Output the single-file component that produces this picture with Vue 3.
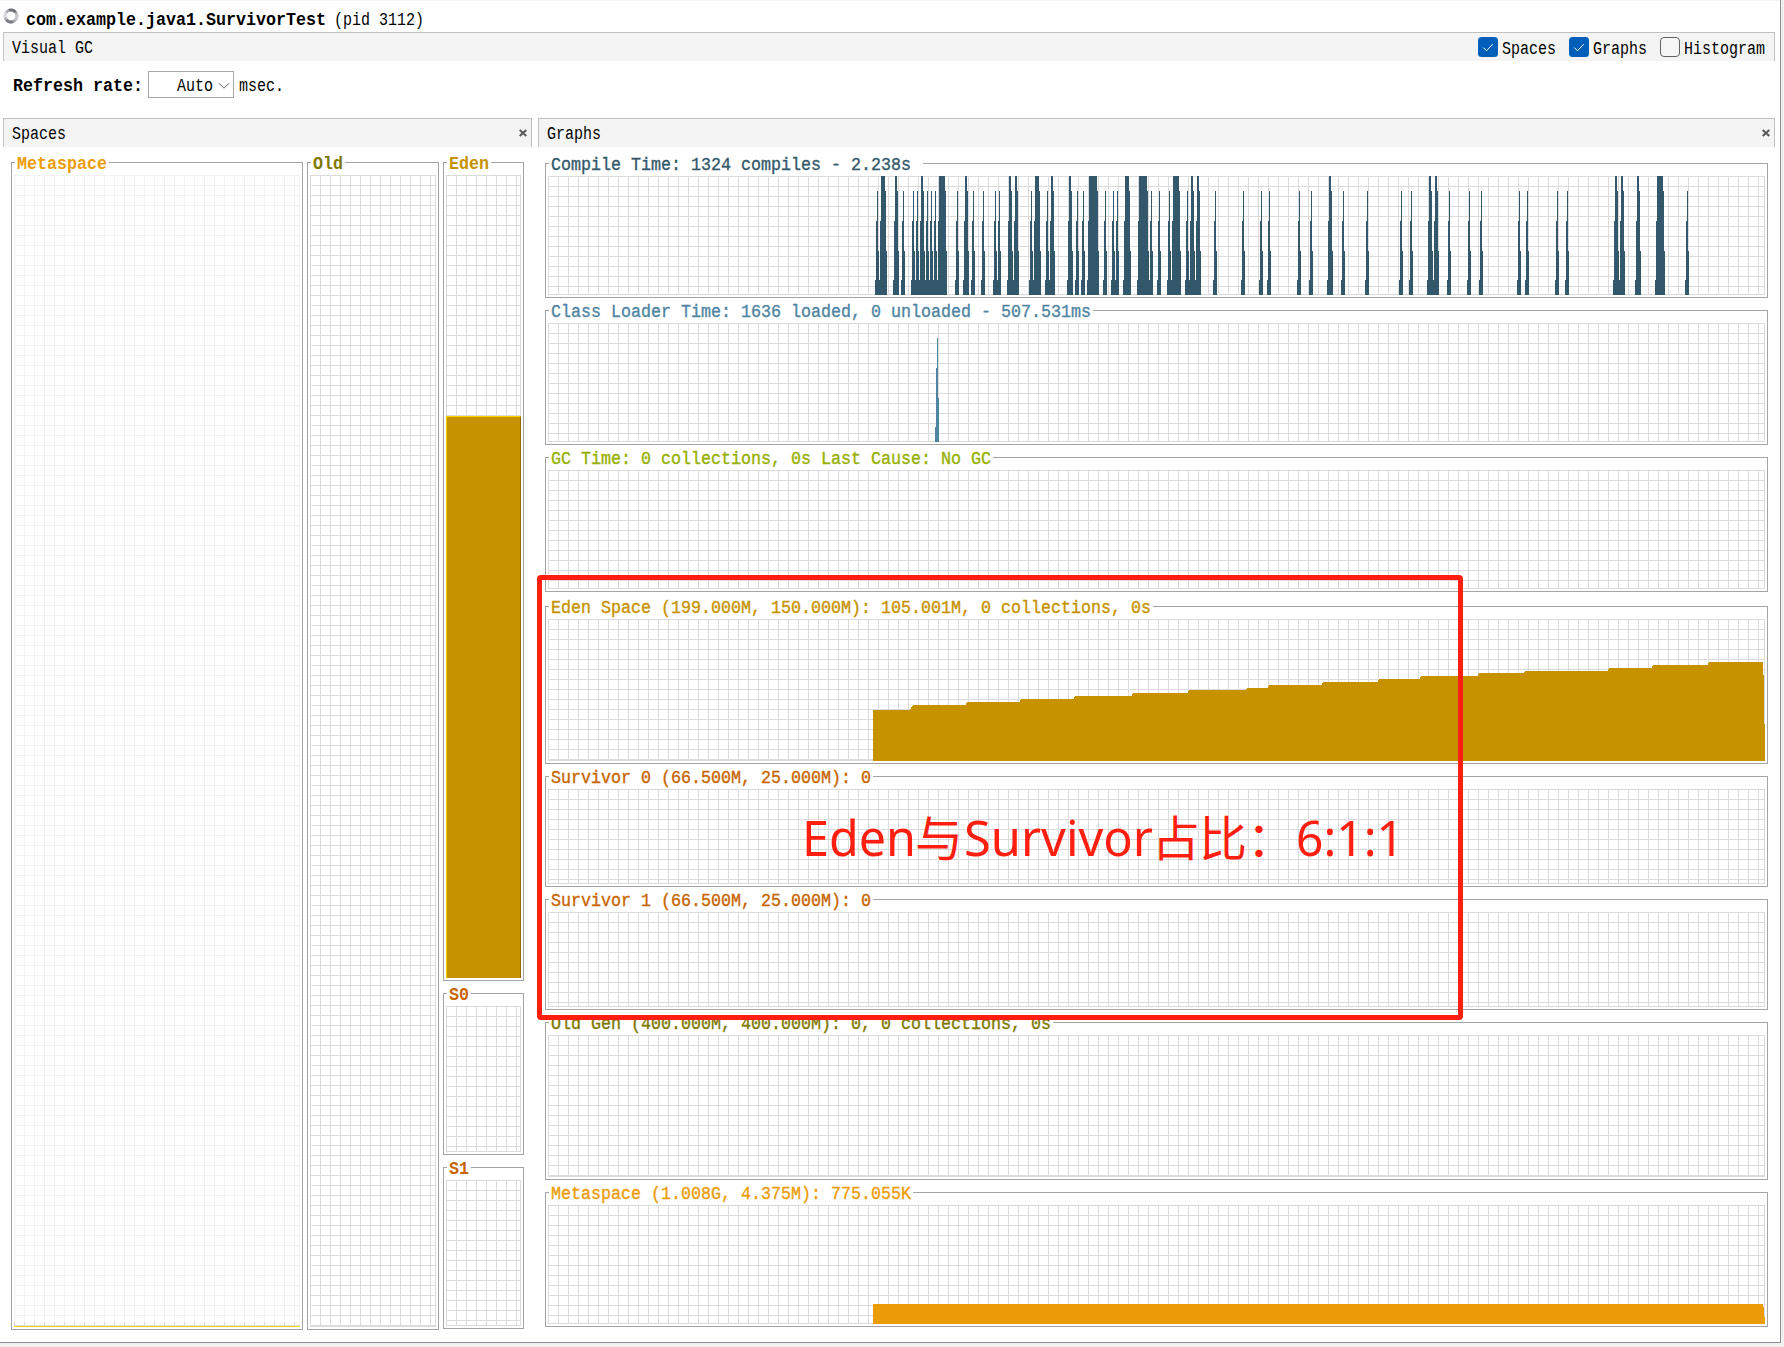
<script setup>
import { h } from 'vue'

// Fixed-pitch label: 9px per character, 10px when bold.
const Mono = (props) => {
  const pitch = props.bold ? 10 : 9
  return h(
    'span',
    { class: ['mono', { 'mono-bold': props.bold }], style: { width: props.text.length * pitch + 'px' } },
    [h('span', { class: 'mono-text' }, props.text)]
  )
}
Mono.props = { text: String, bold: Boolean }

const toggles = [
  { label: 'Spaces', on: true },
  { label: 'Graphs', on: true },
  { label: 'Histogram', on: false }
]

// Compile events: [column, columns at full height]
const compiles = [
  [877, 0], [881, 4], [895, 2], [903, 0], [913, 0], [917, 0], [921, 2], [927, 0], [931, 0], [935, 0],
  [939, 6], [957, 0], [965, 2], [973, 0], [983, 0], [995, 0], [999, 0], [1009, 2], [1015, 2], [1031, 0],
  [1035, 4], [1047, 0], [1051, 2], [1069, 2], [1077, 0], [1083, 0], [1089, 8], [1105, 0], [1113, 0],
  [1117, 0], [1125, 4], [1139, 8], [1151, 0], [1159, 0], [1169, 0], [1173, 6], [1187, 0], [1191, 2],
  [1197, 2], [1215, 0], [1243, 0], [1261, 0], [1269, 0], [1299, 0], [1311, 0], [1329, 2], [1343, 0],
  [1367, 0], [1401, 0], [1411, 0], [1429, 2], [1435, 2], [1449, 0], [1469, 0], [1481, 0], [1519, 0],
  [1527, 0], [1557, 0], [1567, 0], [1615, 2], [1621, 2], [1637, 2], [1657, 6], [1687, 0]
]

const LEFT = 548
const spikes = (list) =>
  list
    .map(([x, full]) => {
      const cols = [[x - 2, 1, 15], [x - 1, 1, 74]]
      if (full) cols.push([x, full, 119])
      cols.push([x + full, 1, 104], [x + full + 1, 1, 44])
      return cols.map(([cx, w, ht]) => `M${cx - LEFT} ${119 - ht}h${w}v${ht}h${-w}z`).join('')
    })
    .join('')

const edenSteps = [
  [966, 702], [1020, 699], [1074, 696], [1132, 693], [1188, 690], [1246, 688], [1268, 685], [1322, 682],
  [1378, 679], [1420, 676], [1478, 673], [1524, 671], [1608, 668], [1652, 665], [1708, 662]
]
const edenPath = (() => {
  const ox = LEFT
  const oy = 619
  let d = `M${873 - ox} ${761 - oy}V${710 - oy}H${910 - ox}V${709 - oy}h1v-2h1v-1h1V${705 - oy}`
  for (const [x, y] of edenSteps) d += `H${x - ox}V${y + 1 - oy}h1V${y - oy}`
  return d + `H${1763 - ox}V${675 - oy}h1V${724 - oy}h1V${761 - oy}z`
})()

const graphs = [
  { id: 'compile', title: 'Compile Time: 1324 compiles - 2.238s ', color: '#33586b', path: spikes(compiles) },
  { id: 'loader', title: 'Class Loader Time: 1636 loaded, 0 unloaded - 507.531ms', color: '#4f85a3', path: spikes([[937, 0]]) },
  { id: 'gc', title: 'GC Time: 0 collections, 0s Last Cause: No GC', color: '#96b000', path: '' },
  { id: 'eden', title: 'Eden Space (199.000M, 150.000M): 105.001M, 0 collections, 0s', color: '#c69200', path: edenPath },
  { id: 's0', title: 'Survivor 0 (66.500M, 25.000M): 0', color: '#c86400', path: '' },
  { id: 's1', title: 'Survivor 1 (66.500M, 25.000M): 0', color: '#c86400', path: '' },
  { id: 'old', title: 'Old Gen (400.000M, 400.000M): 0, 0 collections, 0s', color: '#807800', path: '' },
  { id: 'meta', title: 'Metaspace (1.008G, 4.375M): 775.055K', color: '#ec9c09', path: 'M325 119V99h890v3h1v10h1v7z' }
]
</script>

<template>
  <div class="app">
    <div class="window">
      <header class="title">
        <svg class="spinner" width="16" height="16" viewBox="0 0 16 16" fill="none" stroke-width="2.8">
          <circle cx="8" cy="8" r="6" stroke="#a9aab0" />
          <path d="M3.2 4.4A6 6 0 0 0 2.2 9.6" stroke="#dcdde2" />
          <path d="M6 2.3A6 6 0 0 1 12.6 4.2" stroke="#6d6f78" />
          <path d="M13.6 6A6 6 0 0 1 12.4 12" stroke="#c9cad0" />
          <path d="M10 13.7A6 6 0 0 1 3.6 12" stroke="#777983" />
        </svg>
        <Mono text="com.example.java1.SurvivorTest" bold />
        <Mono class="pid" text="(pid 3112)" />
      </header>

      <div class="bar main-bar">
        <Mono text="Visual GC" />
        <div class="toggles">
          <label v-for="t in toggles" :key="t.label" class="toggle">
            <svg width="20" height="20" viewBox="0 0 20 20" fill="none">
              <rect v-if="t.on" width="20" height="20" rx="3.5" fill="#005fb8" />
              <rect v-else x=".5" y=".5" width="19" height="19" rx="3.5" fill="#f6f6f6" stroke="#626262" />
              <path v-if="t.on" d="M5.3 10.6l3.2 3.2 6.2-6.6" stroke="#fff" stroke-width="1" />
            </svg>
            <Mono :text="t.label" />
          </label>
        </div>
      </div>

      <div class="toolbar">
        <Mono text="Refresh rate:" bold />
        <div class="combo">
          <Mono text="Auto" />
          <svg width="12" height="8" viewBox="0 0 12 8" fill="none" stroke="#5c5c5c"><path d="M1 1.2l5 5 5-5" /></svg>
        </div>
        <Mono text="msec." />
      </div>

      <main class="columns">
        <section class="spaces">
          <div class="bar">
            <Mono text="Spaces" />
            <svg class="close" width="8" height="8" viewBox="0 0 8 8" stroke="#5a5a5a" stroke-width="2"><path d="M.7.9l6.6 6.2M7.3.9L.7 7.1" /></svg>
          </div>
          <div class="spaces-body">
            <div class="panel metaspace">
              <div class="legend"><Mono text="Metaspace" bold /></div>
              <div class="grid faint"><div class="committed"></div></div>
            </div>
            <div class="panel old">
              <div class="legend"><Mono text="Old" bold /></div>
              <div class="grid"></div>
            </div>
            <div class="young">
              <div class="panel eden">
                <div class="legend"><Mono text="Eden" bold /></div>
                <div class="grid"><div class="fill"></div></div>
              </div>
              <div v-for="s in ['S0', 'S1']" :key="s" class="panel survivor">
                <div class="legend"><Mono :text="s" bold /></div>
                <div class="grid"></div>
              </div>
            </div>
          </div>
        </section>

        <section class="graphs">
          <div class="bar">
            <Mono text="Graphs" />
            <svg class="close" width="8" height="8" viewBox="0 0 8 8" stroke="#5a5a5a" stroke-width="2"><path d="M.7.9l6.6 6.2M7.3.9L.7 7.1" /></svg>
          </div>
          <div class="graphs-body">
            <div v-for="g in graphs" :key="g.id" class="panel graph" :class="'graph-' + g.id" :style="{ color: g.color }">
              <div class="legend"><Mono class="light" :text="g.title" bold /></div>
              <div class="grid">
                <svg v-if="g.path" class="plot" shape-rendering="crispEdges"><path :d="g.path" fill="currentColor" /></svg>
              </div>
            </div>
          </div>
        </section>
      </main>
    </div>

    <div class="highlight"></div>
    <svg class="note" width="620" height="80" fill="#ff1e10">
      <text y="61">
        <tspan x="1" textLength="114" lengthAdjust="spacingAndGlyphs">Eden</tspan>
        <tspan x="114" class="cjk">与</tspan>
        <tspan x="163" textLength="189" lengthAdjust="spacingAndGlyphs">Survivor</tspan>
        <tspan x="351" class="cjk">占</tspan>
        <tspan x="398" class="cjk">比</tspan>
        <tspan x="446" class="cjk">：</tspan>
        <tspan x="495" textLength="108" lengthAdjust="spacingAndGlyphs">6:1:1</tspan>
      </text>
    </svg>
  </div>
</template>

<style>
body {
  margin: 0;
}
.mono {
  display: inline-block;
  flex: none;
  height: 20px;
  line-height: 20px;
  font-family: 'Liberation Mono', monospace;
  font-size: 18px;
  white-space: pre;
}
.mono-text {
  display: inline-block;
  transform: scaleX(0.8332);
  transform-origin: 0 0;
}
.mono-bold {
  font-weight: 700;
}
.mono-bold .mono-text {
  transform: scaleX(0.9258);
}
.mono.light {
  font-weight: 400;
  -webkit-text-stroke: 0.35px currentColor;
}
</style>

<style scoped>
.app {
  position: relative;
  width: 1784px;
  height: 1347px;
  overflow: hidden;
  background: #f0f0f0;
  color: #000;
}
.window {
  box-sizing: border-box;
  width: 1781px;
  height: 1343px;
  border: solid #8d8d95;
  border-width: 0 1px 1px 0;
  background: #fff;
}
.title {
  box-sizing: border-box;
  display: flex;
  height: 32px;
  padding: 9px 0 0 3px;
  border-top: 1px solid #f6f6f6;
}
.spinner {
  margin: -2px 7px 0 0;
}
.pid {
  margin-left: 8px;
}
.bar {
  box-sizing: border-box;
  display: flex;
  justify-content: space-between;
  height: 29px;
  padding: 5px 4px 0 8px;
  border: solid #c0c0c0;
  border-width: 1px 1px 0;
  background: #f4f4f4;
}
.main-bar {
  width: 1772px;
  margin-left: 3px;
  padding: 5px 9px 0 8px;
}
.toggles {
  display: flex;
  gap: 13px;
}
.toggle {
  display: flex;
  gap: 4px;
}
.toggle svg {
  margin-top: -1px;
}
.toggle .mono {
  margin-top: 1px;
}
.close {
  margin-top: 5px;
}
.toolbar {
  box-sizing: border-box;
  display: flex;
  height: 57px;
  padding: 10px 0 0 13px;
}
.toolbar > .mono {
  margin-top: 5px;
}
.combo {
  box-sizing: border-box;
  display: flex;
  width: 86px;
  height: 27px;
  margin: 0 5px;
  padding: 4px 0 0 28px;
  border: 1px solid #a8a8a8;
}
.combo svg {
  margin: 6px 0 0 5px;
}
.columns {
  display: flex;
  gap: 6px;
  margin-left: 3px;
}
.spaces {
  width: 529px;
}
.graphs {
  width: 1237px;
}
.spaces-body {
  display: flex;
  gap: 4px;
  padding: 15px 8px 0;
}
.graphs-body {
  display: flex;
  flex-direction: column;
  gap: 12px;
  padding: 16px 7px 0;
}
.panel {
  box-sizing: border-box;
  position: relative;
  display: flex;
  flex: none;
  padding: 12px 2px 2px;
  border: 1px solid #a4a4a4;
}
.legend {
  position: absolute;
  top: -9px;
  left: 3px;
  height: 20px;
  padding: 0 2px;
  background: #fff;
}
.grid {
  --line: #dbdbdb;
  position: relative;
  flex: 1;
  background:
    linear-gradient(var(--line), var(--line)) 100% 0 / 1px 100% no-repeat,
    linear-gradient(var(--line), var(--line)) 0 100% / 100% 1px no-repeat,
    linear-gradient(var(--line) 1px, transparent 1px) 0 0 / 10px 10px,
    linear-gradient(90deg, var(--line) 1px, transparent 1px) 0 0 / 10px 10px;
}
.faint {
  --line: #f2f2f2;
}
.committed {
  position: absolute;
  inset: auto 0 0;
  height: 5px;
  border-bottom: 1px solid #ffdc00;
  box-sizing: border-box;
  background:
    linear-gradient(#dbdbdb, #dbdbdb) 0 100% / 100% 1px no-repeat,
    linear-gradient(90deg, #dbdbdb 1px, transparent 1px) 0 0 / 10px 10px;
}
.metaspace {
  width: 292px;
  height: 1168px;
  color: #ec9c09;
}
.old {
  width: 132px;
  color: #807800;
}
.young {
  display: flex;
  flex-direction: column;
  gap: 12px;
  width: 81px;
}
.eden {
  height: 819px;
  color: #c69200;
}
.survivor {
  height: 162px;
  color: #c86400;
}
.fill {
  position: absolute;
  inset: 241px 0 0;
  box-sizing: border-box;
  border: solid;
  border-width: 1px 1px 0;
  border-color: #ffd000 #8e6800 #ffd000 #ffd000;
  background: #c69200;
}
.graph {
  height: 135px;
}
.graph-eden {
  height: 158px;
  margin-top: 2px;
}
.graph-old {
  height: 158px;
}
.graph-s0,
.graph-s1 {
  height: 111px;
}
.plot {
  position: absolute;
  inset: 0;
  width: 100%;
  height: 100%;
}
.highlight {
  position: absolute;
  box-sizing: border-box;
  left: 537px;
  top: 575px;
  width: 926px;
  height: 445px;
  border: 5px solid #ff1e10;
  border-radius: 4px;
}
.note {
  position: absolute;
  left: 801px;
  top: 795px;
  font-family: 'Noto Sans', 'Noto Sans CJK SC', sans-serif;
  font-size: 50px;
}
.cjk {
  font-family: 'Noto Sans CJK SC', sans-serif;
  font-size: 48px;
}
</style>
